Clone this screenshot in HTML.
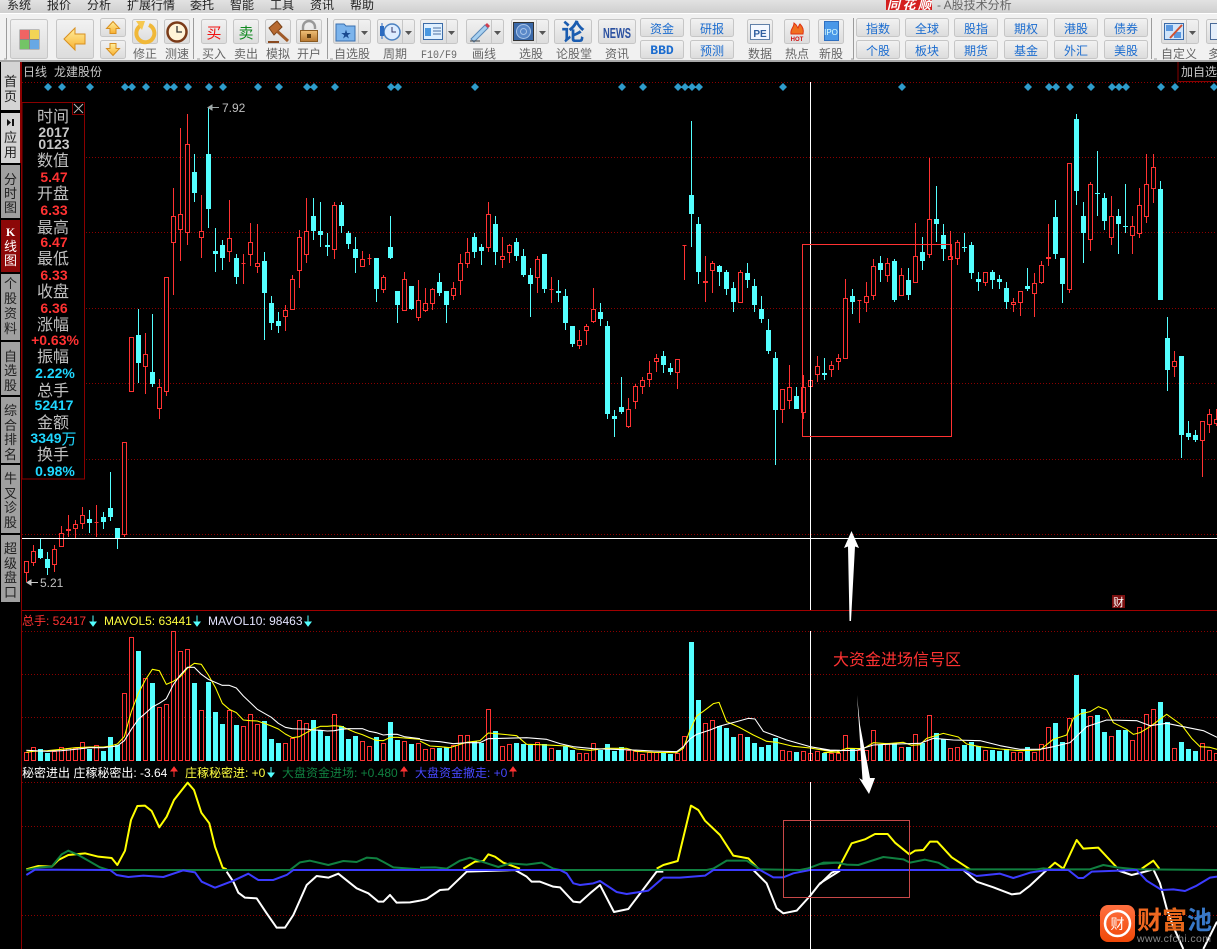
<!DOCTYPE html>
<html><head><meta charset="utf-8"><title>A股技术分析</title>
<style>
html,body{margin:0;padding:0;background:#000;width:1217px;height:949px;overflow:hidden}
svg{display:block}
text{font-family:"Liberation Sans","WenQuanYi Zen Hei","Noto Sans CJK SC",sans-serif}
.lb{font-size:12px;fill:#666;text-anchor:middle}
.bl{font-size:12px;fill:#1b6ccf;text-anchor:middle}
.tb{font-size:13px;fill:#222;text-anchor:middle}
.il{font-size:16px;fill:#c0c0c0;text-anchor:middle}
.iv{font-size:14px;font-weight:bold;text-anchor:middle}
.m{font-size:12px;fill:#222}
.b{fill:url(#bg);stroke:#c6c6c6}
.sep{stroke:#9c9c9c;fill:none}
.grid{stroke:#8a0000;stroke-width:1;stroke-dasharray:1 2;fill:none}
</style></head><body>
<svg width="1217" height="949" viewBox="0 0 1217 949" xmlns="http://www.w3.org/2000/svg">
<defs>
<linearGradient id="bg" x1="0" y1="0" x2="0" y2="1"><stop offset="0" stop-color="#f2f2f2"/><stop offset="1" stop-color="#dcdcdc"/></linearGradient>
<linearGradient id="top" x1="0" y1="0" x2="0" y2="1"><stop offset="0" stop-color="#e2e2e2"/><stop offset="1" stop-color="#cfcfcf"/></linearGradient>
<linearGradient id="ar" x1="0" y1="0" x2="0" y2="1"><stop offset="0" stop-color="#fff0a0"/><stop offset="1" stop-color="#f8b030"/></linearGradient>
<linearGradient id="or" x1="0" y1="0" x2="0" y2="1"><stop offset="0" stop-color="#ff7040"/><stop offset="1" stop-color="#f04808"/></linearGradient>
<linearGradient id="lk" x1="0" y1="0" x2="0" y2="1"><stop offset="0" stop-color="#f0c078"/><stop offset="1" stop-color="#b87830"/></linearGradient>
</defs>
<rect width="1217" height="949" fill="#000"/>

<!-- menu bar -->
<rect width="1217" height="13" fill="url(#top)"/>
<text x="7" y="9" class="m">系统</text><text x="47" y="9" class="m">报价</text><text x="87" y="9" class="m">分析</text><text x="127" y="9" class="m">扩展行情</text><text x="190" y="9" class="m">委托</text><text x="230" y="9" class="m">智能</text><text x="270" y="9" class="m">工具</text><text x="310" y="9" class="m">资讯</text><text x="350" y="9" class="m">帮助</text>
<rect x="886" y="0" width="46" height="10" fill="#d42020"/>
<text x="887" y="9" font-size="13" font-weight="bold" fill="#fff" textLength="44" font-style="italic">同花顺</text>
<text x="937" y="9" font-size="12" fill="#666">- A股技术分析</text>

<!-- toolbar -->
<rect y="13" width="1217" height="1" fill="#fff"/>
<rect y="14" width="1217" height="47" fill="#f1f1f1"/>
<rect y="60" width="1217" height="2" fill="#a8a8a8"/>
<path class="sep" d="M6.5 18V59M193.5 18V59M327.5 18V59M853.5 18V59M1151.5 18V59"/>
<path d="M4 59h3M197 59h3M330 59h3M851 59h3M1154 59h3" stroke="#9c9c9c" fill="none"/>

<rect class="b" x="10.5" y="19.5" width="37" height="39" rx="2"/>
<rect x="19.5" y="29.5" width="20" height="20" fill="#888"/>
<rect x="20" y="30" width="9" height="9" fill="#f06464"/><rect x="30" y="30" width="9" height="9" fill="#f2d455"/><rect x="20" y="40" width="9" height="9" fill="#74c466"/><rect x="30" y="40" width="9" height="9" fill="#68a8e4"/>

<rect class="b" x="56.5" y="19.5" width="37" height="39" rx="2"/>
<path d="M64 39 75 28v6h10v10H75v6z" fill="url(#ar)" stroke="#d89020"/>

<rect class="b" x="100.5" y="18.5" width="25" height="18" rx="2"/>
<rect class="b" x="100.5" y="40.5" width="25" height="18" rx="2"/>
<path d="M113 21.5 119.5 28.5h-3.5v5h-6v-5h-3.5z" fill="url(#ar)" stroke="#d89020"/>
<path d="M113 55.5 119.5 48.5h-3.5v-5h-6v5h-3.5z" fill="url(#ar)" stroke="#d89020"/>

<rect class="b" x="132.5" y="19.5" width="25" height="24" rx="2"/>
<path d="M149 25a9 9 0 1 1-9 1" fill="none" stroke="#f0b838" stroke-width="4"/>
<path d="M136 21l9 0-3 9z" fill="#f6c850"/>
<text class="lb" x="145" y="58">修正</text>

<rect class="b" x="164.5" y="19.5" width="25" height="24" rx="2"/>
<circle cx="177" cy="32" r="9.5" fill="#fff4d8" stroke="#7a3a18" stroke-width="2.5"/>
<path d="M177 26v6h5" stroke="#333" stroke-width="1.3" fill="none"/>
<text class="lb" x="177" y="58">测速</text>

<rect class="b" x="201.5" y="19.5" width="25" height="24" rx="2"/>
<text x="214" y="38" font-size="15" fill="#f01010" text-anchor="middle">买</text>
<text class="lb" x="214" y="58">买入</text>
<rect class="b" x="233.5" y="19.5" width="25" height="24" rx="2"/>
<text x="246" y="38" font-size="15" fill="#108a20" text-anchor="middle">卖</text>
<text class="lb" x="246" y="58">卖出</text>
<rect class="b" x="265.5" y="19.5" width="25" height="24" rx="2"/>
<path d="M269 28 277 21l5 6-8 8z" fill="#b86a30" stroke="#7a4218"/><path d="M277 31 288 41" stroke="#a05a28" stroke-width="3"/><path d="M268 42h11" stroke="#8a4a20" stroke-width="2"/>
<text class="lb" x="278" y="58">模拟</text>
<rect class="b" x="296.5" y="19.5" width="25" height="24" rx="2"/>
<path d="M303 31v-4a6 6 0 0 1 12 0v2" stroke="#999" stroke-width="2.4" fill="none"/>
<rect x="300.5" y="30.5" width="17" height="11" fill="url(#lk)" stroke="#8a5a20"/><rect x="307" y="34" width="4" height="4" fill="#5a3a10"/>
<text class="lb" x="309" y="58">开户</text>

<rect class="b" x="333.5" y="19.5" width="37" height="24" rx="2"/><path d="M358.5 20V43" stroke="#c6c6c6"/>
<path d="M336 24h8l2 2h9v15h-19z" fill="#7cb4ec" stroke="#3a70b0"/><text x="346" y="38" font-size="10" fill="#1a4a90" text-anchor="middle">★</text>
<path d="M361 31h7l-3.5 4z" fill="#555"/>
<text class="lb" x="352" y="58">自选股</text>

<rect class="b" x="377.5" y="19.5" width="37" height="24" rx="2"/><path d="M402.5 20V43" stroke="#c6c6c6"/>
<circle cx="392" cy="32" r="8" fill="#dcecff" stroke="#4a80c0" stroke-width="1.5"/><path d="M392 27v5h4" stroke="#336" fill="none"/><rect x="380" y="26" width="4" height="10" fill="#2a6ac0"/><path d="M382 23v16" stroke="#2a6ac0"/>
<path d="M405 31h7l-3.5 4z" fill="#555"/>
<text class="lb" x="395" y="58">周期</text>

<rect class="b" x="420.5" y="19.5" width="37" height="24" rx="2"/><path d="M446.5 20V43" stroke="#c6c6c6"/>
<rect x="423.5" y="23.5" width="19" height="16" fill="#dff0ff" stroke="#3c6ca8"/><path d="M425 28h6v8h-6z" fill="#4a98e0"/><path d="M433 28h8M433 31h8M433 34h8" stroke="#4a6ea0"/>
<path d="M448 31h7l-3.5 4z" fill="#555"/>
<text x="439" y="58" font-size="11" fill="#666" text-anchor="middle" textLength="36" lengthAdjust="spacingAndGlyphs" style="font-family:'Liberation Mono',monospace">F10/F9</text>

<rect class="b" x="466.5" y="19.5" width="37" height="24" rx="2"/><path d="M491.5 20V43" stroke="#c6c6c6"/>
<path d="M471 39 485 25l3 3-14 14z" fill="#a8d0f0" stroke="#5a88b8"/><path d="M485 25l2-2 3 3-2 2z" fill="#d04050"/><path d="M470 41h10" stroke="#444"/>
<path d="M494 31h7l-3.5 4z" fill="#555"/>
<text class="lb" x="484" y="58">画线</text>

<rect class="b" x="511.5" y="19.5" width="37" height="24" rx="2"/><path d="M536.5 20V43" stroke="#c6c6c6"/>
<rect x="513.5" y="22.5" width="20" height="18" fill="#3a68a8" stroke="#333"/><circle cx="523.5" cy="31.5" r="7" fill="#5a88c8" stroke="#a8c4e8"/><circle cx="523.5" cy="31.5" r="3" fill="none" stroke="#a8c4e8"/>
<path d="M539 31h7l-3.5 4z" fill="#555"/>
<text class="lb" x="531" y="58">选股</text>

<rect class="b" x="554.5" y="19.5" width="37" height="24" rx="2"/>
<text x="573" y="40" font-size="23" font-weight="bold" fill="#1a5cb0" text-anchor="middle">论</text>
<text class="lb" x="574" y="58">论股堂</text>

<rect class="b" x="598.5" y="19.5" width="37" height="24" rx="2"/>
<text x="617" y="38" font-size="15" font-weight="bold" fill="#2a50a0" text-anchor="middle" textLength="28" lengthAdjust="spacingAndGlyphs">NEWS</text>
<text class="lb" x="617" y="58">资讯</text>

<rect class="b" x="640.5" y="18.5" width="43" height="18" rx="2"/><rect class="b" x="640.5" y="40.5" width="43" height="18" rx="2"/>
<text class="bl" x="662" y="33">资金</text><text x="662" y="54" font-size="13" font-weight="bold" fill="#1b6ccf" text-anchor="middle" style="font-family:'Liberation Mono',monospace">BBD</text>
<rect class="b" x="690.5" y="18.5" width="43" height="18" rx="2"/><rect class="b" x="690.5" y="40.5" width="43" height="18" rx="2"/>
<text class="bl" x="712" y="33">研报</text><text class="bl" x="712" y="55">预测</text>

<rect class="b" x="747.5" y="19.5" width="25" height="24" rx="2"/>
<rect x="750.5" y="24.5" width="19" height="15" fill="#f4f8ff" stroke="#6080a8"/><text x="760" y="37" font-size="10" font-weight="bold" fill="#3060a0" text-anchor="middle">PE</text>
<text class="lb" x="760" y="58">数据</text>
<rect class="b" x="784.5" y="19.5" width="25" height="24" rx="2"/>
<path d="M791 34c-1-5 3-6 3-11 3 2 3 4 4 5 1-2 1-3 2-4 3 3 4 6 3 10z" fill="#f07020" stroke="#e03010"/><text x="797" y="41" font-size="6" font-weight="bold" fill="#d01010" text-anchor="middle">HOT</text>
<text class="lb" x="797" y="58">热点</text>
<rect class="b" x="818.5" y="19.5" width="25" height="24" rx="2"/>
<rect x="824.5" y="21.5" width="14" height="19" fill="#4a98e8" stroke="#3070c0"/><text x="831" y="35" font-size="8" fill="#dff" text-anchor="middle">IPO</text>
<text class="lb" x="831" y="58">新股</text>

<rect class="b" x="856.5" y="18.5" width="43" height="18" rx="2"/><rect class="b" x="856.5" y="40.5" width="43" height="18" rx="2"/>
<rect class="b" x="905.5" y="18.5" width="43" height="18" rx="2"/><rect class="b" x="905.5" y="40.5" width="43" height="18" rx="2"/>
<rect class="b" x="954.5" y="18.5" width="43" height="18" rx="2"/><rect class="b" x="954.5" y="40.5" width="43" height="18" rx="2"/>
<rect class="b" x="1004.5" y="18.5" width="43" height="18" rx="2"/><rect class="b" x="1004.5" y="40.5" width="43" height="18" rx="2"/>
<rect class="b" x="1054.5" y="18.5" width="43" height="18" rx="2"/><rect class="b" x="1054.5" y="40.5" width="43" height="18" rx="2"/>
<rect class="b" x="1104.5" y="18.5" width="43" height="18" rx="2"/><rect class="b" x="1104.5" y="40.5" width="43" height="18" rx="2"/>
<text class="bl" x="878" y="33">指数</text><text class="bl" x="878" y="55">个股</text>
<text class="bl" x="927" y="33">全球</text><text class="bl" x="927" y="55">板块</text>
<text class="bl" x="976" y="33">股指</text><text class="bl" x="976" y="55">期货</text>
<text class="bl" x="1026" y="33">期权</text><text class="bl" x="1026" y="55">基金</text>
<text class="bl" x="1076" y="33">港股</text><text class="bl" x="1076" y="55">外汇</text>
<text class="bl" x="1126" y="33">债券</text><text class="bl" x="1126" y="55">美股</text>

<rect class="b" x="1161.5" y="19.5" width="37" height="24" rx="2"/><path d="M1186.5 20V43" stroke="#c6c6c6"/>
<rect x="1164.5" y="23.5" width="19" height="16" fill="#cfe4fa" stroke="#3a6aa8"/><path d="M1166 25h7v6h-7zM1174 32h7v6h-7z" fill="#5a98e0"/><path d="M1170 38 1182 25" stroke="#d05030" stroke-width="2"/>
<path d="M1189 31h7l-3.5 4z" fill="#555"/>
<text class="lb" x="1179" y="58">自定义</text>
<rect class="b" x="1206.5" y="19.5" width="26" height="24" rx="2"/>
<rect x="1210.5" y="23.5" width="12" height="16" fill="#e4eefa" stroke="#4a6a98"/>
<text class="lb" x="1214" y="58">多</text>

<!-- left tabs -->
<rect x="0" y="62" width="21" height="887" fill="#000"/>
<rect x="1" y="62" width="19" height="48" fill="#d4d4d4"/>
<rect x="1" y="113" width="19" height="50" fill="#d4d4d4"/>
<rect x="1" y="165" width="19" height="53" fill="#a0a0a0"/>
<rect x="1" y="220" width="19" height="52" fill="#8c0808"/>
<rect x="1" y="274" width="19" height="66" fill="#a0a0a0"/>
<rect x="1" y="342" width="19" height="53" fill="#a0a0a0"/>
<rect x="1" y="397" width="19" height="66" fill="#a0a0a0"/>
<rect x="1" y="465" width="19" height="68" fill="#a0a0a0"/>
<rect x="1" y="535" width="19" height="67" fill="#a0a0a0"/>
<rect x="20" y="62" width="2" height="101" fill="#8a0000"/>
<text class="tb" x="10.5" y="86">首</text><text class="tb" x="10.5" y="101">页</text>
<path d="M7 119v7l4-3.5zM12 119h2v7h-2z" fill="#111"/>
<text class="tb" x="10.5" y="142">应</text><text class="tb" x="10.5" y="157">用</text>
<text class="tb" x="10.5" y="184">分</text><text class="tb" x="10.5" y="198">时</text><text class="tb" x="10.5" y="212">图</text>
<text x="10.5" y="236" font-size="12" font-weight="bold" fill="#fff" text-anchor="middle" style="font-family:'Liberation Serif',serif">K</text><text class="tb" x="10.5" y="251" style="fill:#fff">线</text><text class="tb" x="10.5" y="265" style="fill:#fff">图</text>
<text class="tb" x="10.5" y="288">个</text><text class="tb" x="10.5" y="303">股</text><text class="tb" x="10.5" y="318">资</text><text class="tb" x="10.5" y="333">料</text>
<text class="tb" x="10.5" y="361">自</text><text class="tb" x="10.5" y="375">选</text><text class="tb" x="10.5" y="390">股</text>
<text class="tb" x="10.5" y="415">综</text><text class="tb" x="10.5" y="430">合</text><text class="tb" x="10.5" y="444">排</text><text class="tb" x="10.5" y="459">名</text>
<text class="tb" x="10.5" y="483">牛</text><text class="tb" x="10.5" y="498">叉</text><text class="tb" x="10.5" y="512">诊</text><text class="tb" x="10.5" y="527">股</text>
<text class="tb" x="10.5" y="553">超</text><text class="tb" x="10.5" y="568">级</text><text class="tb" x="10.5" y="582">盘</text><text class="tb" x="10.5" y="597">口</text>

<!-- frames -->
<path d="M21.5 62V949" stroke="#8a0000" fill="none"/>
<rect x="22" y="610" width="1195" height="1" fill="#a00000"/>
<path d="M1178 62V81.5H1217" stroke="#8a0000" fill="none"/>

<!-- grid -->
<path class="grid" d="M22 82.5H1217M86 157.5H1217M86 232.5H1217M86 308.5H1217M86 383.5H1217M86 459.5H1217M22 534.5H1217M22 631.5H1217M22 674.5H1217M22 717.5H1217M22 782.5H1217M22 826.5H1217M22 915.5H1217"/>

<text x="23" y="76" font-size="12" fill="#c8c8c8">日线</text><text x="54" y="76" font-size="12" fill="#c8c8c8">龙建股份</text>
<text x="1181" y="76" font-size="12" fill="#c8c8c8">加自选</text>

<!-- diamonds -->
<path fill="#2e9ccb" d="M48 83l4 4-4 4-4-4zM62 83l4 4-4 4-4-4zM90 83l4 4-4 4-4-4zM125 83l4 4-4 4-4-4zM132 83l4 4-4 4-4-4zM146 83l4 4-4 4-4-4zM167 83l4 4-4 4-4-4zM174 83l4 4-4 4-4-4zM188 83l4 4-4 4-4-4zM209 83l4 4-4 4-4-4zM223 83l4 4-4 4-4-4zM258 83l4 4-4 4-4-4zM279 83l4 4-4 4-4-4zM307 83l4 4-4 4-4-4zM314 83l4 4-4 4-4-4zM335 83l4 4-4 4-4-4zM391 83l4 4-4 4-4-4zM398 83l4 4-4 4-4-4zM475 83l4 4-4 4-4-4zM622 83l4 4-4 4-4-4zM643 83l4 4-4 4-4-4zM678 83l4 4-4 4-4-4zM685 83l4 4-4 4-4-4zM692 83l4 4-4 4-4-4zM699 83l4 4-4 4-4-4zM783 83l4 4-4 4-4-4zM902 83l4 4-4 4-4-4zM1028 83l4 4-4 4-4-4zM1049 83l4 4-4 4-4-4zM1056 83l4 4-4 4-4-4zM1070 83l4 4-4 4-4-4zM1091 83l4 4-4 4-4-4zM1112 83l4 4-4 4-4-4zM1119 83l4 4-4 4-4-4zM1126 83l4 4-4 4-4-4zM1161 83l4 4-4 4-4-4zM1175 83l4 4-4 4-4-4zM1214 83l4 4-4 4-4-4z"/>

<!-- candles -->
<g shape-rendering="crispEdges">
<path fill="none" stroke="#ff3232" d="M26.5 561V582M33.5 545V566M54.5 545V572M61.5 526V546M68.5 515V537M75.5 520V538M82.5 507V529M96.5 505V537M124.5 442V537M131.5 337V391M145.5 333V394M159.5 379V419M166.5 277V396M173.5 188V295M180.5 128V261M187.5 114V245M201.5 195V258M229.5 200V262M243.5 254V284M250.5 223V266M257.5 224V273M285.5 305V331M292.5 275V309M299.5 230V288M306.5 198V263M334.5 202V259M362.5 251V266M369.5 254V265M383.5 275V293M404.5 272V310M418.5 280V321M425.5 288V312M432.5 288V310M453.5 282V300M460.5 254V295M467.5 238V268M488.5 202V252M502.5 237V268M509.5 244V263M537.5 256V293M551.5 277V303M579.5 330V349M586.5 324V345M593.5 288V323M628.5 398V428M635.5 384V409M642.5 377V394M649.5 361V387M656.5 354V372M677.5 359V389M684.5 245V280M705.5 256V302M712.5 261V293M740.5 270V303M782.5 389V423M789.5 365V409M803.5 375V419M810.5 380V386M817.5 356V382M831.5 361V377M838.5 354V370M845.5 279V359M859.5 300V323M866.5 282V312M873.5 259V300M887.5 258V282M901.5 268V295M915.5 223V282M929.5 158V258M950.5 231V259M957.5 240V265M985.5 272V286M1013.5 298V312M1020.5 291V316M1034.5 273V317M1041.5 261V284M1048.5 224V266M1069.5 163V293M1090.5 182V251M1111.5 196V245M1132.5 216V254M1139.5 188V238M1146.5 154V223M1153.5 154V203M1174.5 351V377M1202.5 421V477M1209.5 409V433M1216.5 409V426"/>
<path fill="#000" stroke="#ff3232" d="M24.5 561.5h4v11h-4zM31.5 551.5h4v11h-4zM52.5 549.5h4v15h-4zM59.5 533.5h4v13h-4zM66.5 529.5h4v1h-4zM73.5 524.5h4v4h-4zM80.5 515.5h4v8h-4zM94.5 522.5h4v0h-4zM122.5 442.5h4v92h-4zM129.5 337.5h4v54h-4zM143.5 354.5h4v12h-4zM157.5 387.5h4v21h-4zM164.5 277.5h4v114h-4zM171.5 216.5h4v26h-4zM178.5 214.5h4v15h-4zM185.5 144.5h4v88h-4zM199.5 231.5h4v6h-4zM227.5 238.5h4v13h-4zM241.5 263.5h4v0h-4zM248.5 242.5h4v12h-4zM255.5 263.5h4v3h-4zM283.5 310.5h4v6h-4zM290.5 279.5h4v30h-4zM297.5 237.5h4v33h-4zM304.5 231.5h4v23h-4zM332.5 205.5h4v44h-4zM360.5 259.5h4v7h-4zM367.5 258.5h4v0h-4zM381.5 277.5h4v12h-4zM402.5 279.5h4v31h-4zM416.5 300.5h4v17h-4zM423.5 303.5h4v7h-4zM430.5 289.5h4v14h-4zM451.5 288.5h4v7h-4zM458.5 263.5h4v17h-4zM465.5 252.5h4v11h-4zM486.5 214.5h4v33h-4zM500.5 256.5h4v3h-4zM507.5 245.5h4v7h-4zM535.5 259.5h4v18h-4zM549.5 289.5h4v0h-4zM577.5 340.5h4v5h-4zM584.5 326.5h4v4h-4zM591.5 309.5h4v12h-4zM626.5 409.5h4v17h-4zM633.5 386.5h4v15h-4zM640.5 380.5h4v6h-4zM647.5 373.5h4v6h-4zM654.5 358.5h4v3h-4zM675.5 359.5h4v13h-4zM682.5 245.5h4v0h-4zM703.5 281.5h4v1h-4zM710.5 263.5h4v7h-4zM738.5 272.5h4v30h-4zM780.5 389.5h4v20h-4zM787.5 387.5h4v13h-4zM801.5 387.5h4v25h-4zM808.5 380.5h4v6h-4zM815.5 366.5h4v8h-4zM829.5 365.5h4v4h-4zM836.5 358.5h4v3h-4zM843.5 298.5h4v60h-4zM857.5 300.5h4v0h-4zM864.5 296.5h4v6h-4zM871.5 266.5h4v29h-4zM885.5 263.5h4v12h-4zM899.5 275.5h4v20h-4zM913.5 256.5h4v26h-4zM927.5 219.5h4v35h-4zM948.5 256.5h4v3h-4zM955.5 242.5h4v16h-4zM983.5 272.5h4v10h-4zM1011.5 302.5h4v2h-4zM1018.5 291.5h4v11h-4zM1032.5 283.5h4v10h-4zM1039.5 265.5h4v17h-4zM1046.5 257.5h4v1h-4zM1067.5 163.5h4v126h-4zM1088.5 184.5h4v55h-4zM1109.5 216.5h4v21h-4zM1130.5 226.5h4v9h-4zM1137.5 205.5h4v28h-4zM1144.5 184.5h4v32h-4zM1151.5 167.5h4v21h-4zM1172.5 361.5h4v5h-4zM1200.5 421.5h4v19h-4zM1207.5 414.5h4v10h-4zM1214.5 419.5h4v4h-4z"/>
<path fill="none" stroke="#54ffff" d="M40.5 538V559M47.5 552V575M89.5 510V533M103.5 512V529M110.5 472V521M117.5 528V549M138.5 309V383M152.5 314V387M194.5 154V202M208.5 107V228M215.5 228V272M222.5 240V270M236.5 254V284M264.5 252V340M271.5 296V330M278.5 312V333M313.5 198V240M320.5 202V247M327.5 233V256M341.5 202V233M348.5 231V249M355.5 237V273M376.5 258V302M390.5 216V259M397.5 291V323M411.5 286V310M439.5 273V296M446.5 291V323M474.5 233V258M481.5 244V265M495.5 216V265M516.5 238V261M523.5 249V277M530.5 268V317M544.5 254V293M558.5 280V302M565.5 289V330M572.5 326V347M600.5 303V326M607.5 321V419M614.5 410V437M621.5 377V414M663.5 351V373M670.5 363V375M691.5 121V247M698.5 217V284M719.5 265V286M726.5 270V295M733.5 282V312M747.5 263V288M754.5 279V312M761.5 296V323M768.5 319V354M775.5 352V465M796.5 387V409M824.5 358V380M852.5 289V314M880.5 256V282M894.5 259V302M908.5 268V300M922.5 237V270M936.5 186V242M943.5 224V261M964.5 233V252M971.5 242V279M978.5 272V291M992.5 270V289M999.5 275V289M1006.5 282V309M1027.5 268V291M1055.5 200V259M1062.5 258V303M1076.5 114V205M1083.5 202V263M1097.5 151V216M1104.5 193V230M1118.5 209V254M1125.5 184V233M1160.5 181V300M1167.5 317V391M1181.5 356V458M1188.5 421V440M1195.5 430V442"/>
<path fill="#54ffff" d="M38 549h5v9h-5zM45 559h5v9h-5zM87 519h5v4h-5zM101 517h5v5h-5zM108 508h5v9h-5zM115 528h5v10h-5zM136 335h5v28h-5zM150 372h5v12h-5zM192 172h5v21h-5zM206 154h5v55h-5zM213 251h5v3h-5zM220 245h5v13h-5zM234 258h5v19h-5zM262 261h5v32h-5zM269 303h5v20h-5zM276 321h5v5h-5zM311 216h5v15h-5zM318 231h5v4h-5zM325 245h5v2h-5zM339 205h5v21h-5zM346 233h5v11h-5zM353 249h5v9h-5zM374 258h5v31h-5zM388 247h5v11h-5zM395 291h5v14h-5zM409 286h5v23h-5zM437 282h5v11h-5zM444 291h5v14h-5zM472 237h5v15h-5zM479 247h5v4h-5zM493 224h5v28h-5zM514 242h5v14h-5zM521 256h5v19h-5zM528 275h5v9h-5zM542 254h5v35h-5zM556 291h5v2h-5zM563 296h5v27h-5zM570 326h5v18h-5zM598 312h5v7h-5zM605 326h5v88h-5zM612 416h5v3h-5zM619 407h5v5h-5zM661 356h5v9h-5zM668 368h5v4h-5zM689 195h5v19h-5zM696 224h5v48h-5zM717 266h5v6h-5zM724 272h5v17h-5zM731 288h5v14h-5zM745 273h5v7h-5zM752 286h5v19h-5zM759 309h5v10h-5zM766 330h5v21h-5zM773 358h5v52h-5zM794 396h5v13h-5zM822 373h5v2h-5zM850 296h5v6h-5zM878 263h5v7h-5zM892 261h5v39h-5zM906 280h5v15h-5zM920 252h5v9h-5zM934 219h5v5h-5zM941 235h5v14h-5zM962 247h5v1h-5zM969 245h5v28h-5zM976 279h5v3h-5zM990 272h5v8h-5zM997 279h5v3h-5zM1004 288h5v14h-5zM1025 286h5v3h-5zM1053 217h5v37h-5zM1060 258h5v26h-5zM1074 119h5v72h-5zM1081 216h5v17h-5zM1095 193h5v1h-5zM1102 198h5v23h-5zM1116 216h5v8h-5zM1123 226h5v1h-5zM1158 189h5v111h-5zM1165 338h5v32h-5zM1179 356h5v79h-5zM1186 433h5v4h-5zM1193 435h5v5h-5z"/>

<!-- volume bars -->
<path fill="#000" stroke="#ff3232" d="M24.5 752.5h4V760.5h-4zM31.5 747.5h4V760.5h-4zM52.5 751.5h4V760.5h-4zM59.5 747.5h4V760.5h-4zM66.5 748.5h4V760.5h-4zM73.5 748.5h4V760.5h-4zM80.5 742.5h4V760.5h-4zM94.5 745.5h4V760.5h-4zM122.5 693.5h4V760.5h-4zM129.5 637.5h4V760.5h-4zM143.5 678.5h4V760.5h-4zM157.5 707.5h4V760.5h-4zM164.5 704.5h4V760.5h-4zM171.5 631.5h4V760.5h-4zM178.5 651.5h4V760.5h-4zM185.5 649.5h4V760.5h-4zM199.5 710.5h4V760.5h-4zM227.5 710.5h4V760.5h-4zM241.5 726.5h4V760.5h-4zM248.5 714.5h4V760.5h-4zM255.5 724.5h4V760.5h-4zM283.5 743.5h4V760.5h-4zM290.5 738.5h4V760.5h-4zM297.5 720.5h4V760.5h-4zM304.5 723.5h4V760.5h-4zM332.5 714.5h4V760.5h-4zM360.5 741.5h4V760.5h-4zM367.5 746.5h4V760.5h-4zM381.5 743.5h4V760.5h-4zM402.5 741.5h4V760.5h-4zM416.5 743.5h4V760.5h-4zM423.5 749.5h4V760.5h-4zM430.5 748.5h4V760.5h-4zM451.5 745.5h4V760.5h-4zM458.5 735.5h4V760.5h-4zM465.5 735.5h4V760.5h-4zM486.5 709.5h4V760.5h-4zM500.5 746.5h4V760.5h-4zM507.5 744.5h4V760.5h-4zM535.5 742.5h4V760.5h-4zM549.5 748.5h4V760.5h-4zM577.5 753.5h4V760.5h-4zM584.5 753.5h4V760.5h-4zM591.5 743.5h4V760.5h-4zM626.5 750.5h4V760.5h-4zM633.5 751.5h4V760.5h-4zM640.5 754.5h4V760.5h-4zM647.5 752.5h4V760.5h-4zM654.5 752.5h4V760.5h-4zM675.5 753.5h4V760.5h-4zM682.5 736.5h4V760.5h-4zM703.5 723.5h4V760.5h-4zM710.5 720.5h4V760.5h-4zM738.5 734.5h4V760.5h-4zM780.5 750.5h4V760.5h-4zM787.5 751.5h4V760.5h-4zM801.5 751.5h4V760.5h-4zM808.5 753.5h4V760.5h-4zM815.5 751.5h4V760.5h-4zM829.5 753.5h4V760.5h-4zM836.5 753.5h4V760.5h-4zM843.5 735.5h4V760.5h-4zM857.5 750.5h4V760.5h-4zM864.5 750.5h4V760.5h-4zM871.5 730.5h4V760.5h-4zM885.5 743.5h4V760.5h-4zM899.5 747.5h4V760.5h-4zM913.5 734.5h4V760.5h-4zM927.5 715.5h4V760.5h-4zM948.5 748.5h4V760.5h-4zM955.5 747.5h4V760.5h-4zM983.5 750.5h4V760.5h-4zM1011.5 752.5h4V760.5h-4zM1018.5 752.5h4V760.5h-4zM1032.5 752.5h4V760.5h-4zM1039.5 744.5h4V760.5h-4zM1046.5 727.5h4V760.5h-4zM1067.5 718.5h4V760.5h-4zM1088.5 716.5h4V760.5h-4zM1109.5 736.5h4V760.5h-4zM1130.5 740.5h4V760.5h-4zM1137.5 727.5h4V760.5h-4zM1144.5 714.5h4V760.5h-4zM1151.5 709.5h4V760.5h-4zM1172.5 748.5h4V760.5h-4zM1200.5 743.5h4V760.5h-4zM1207.5 750.5h4V760.5h-4zM1214.5 753.5h4V760.5h-4z"/>
<path fill="#54ffff" d="M38 749h5V761h-5zM45 753h5V761h-5zM87 749h5V761h-5zM101 751h5V761h-5zM108 737h5V761h-5zM115 745h5V761h-5zM136 651h5V761h-5zM150 683h5V761h-5zM192 683h5V761h-5zM206 682h5V761h-5zM213 712h5V761h-5zM220 724h5V761h-5zM234 725h5V761h-5zM262 721h5V761h-5zM269 739h5V761h-5zM276 743h5V761h-5zM311 720h5V761h-5zM318 730h5V761h-5zM325 736h5V761h-5zM339 726h5V761h-5zM346 739h5V761h-5zM353 736h5V761h-5zM374 737h5V761h-5zM388 722h5V761h-5zM395 740h5V761h-5zM409 744h5V761h-5zM437 748h5V761h-5zM444 747h5V761h-5zM472 741h5V761h-5zM479 743h5V761h-5zM493 731h5V761h-5zM514 743h5V761h-5zM521 744h5V761h-5zM528 745h5V761h-5zM542 744h5V761h-5zM556 750h5V761h-5zM563 746h5V761h-5zM570 750h5V761h-5zM598 750h5V761h-5zM605 744h5V761h-5zM612 751h5V761h-5zM619 747h5V761h-5zM661 752h5V761h-5zM668 754h5V761h-5zM689 642h5V761h-5zM696 700h5V761h-5zM717 726h5V761h-5zM724 728h5V761h-5zM731 737h5V761h-5zM745 737h5V761h-5zM752 743h5V761h-5zM759 747h5V761h-5zM766 745h5V761h-5zM773 738h5V761h-5zM794 752h5V761h-5zM822 753h5V761h-5zM850 748h5V761h-5zM878 745h5V761h-5zM892 743h5V761h-5zM906 747h5V761h-5zM920 743h5V761h-5zM934 733h5V761h-5zM941 739h5V761h-5zM962 745h5V761h-5zM969 742h5V761h-5zM976 746h5V761h-5zM990 750h5V761h-5zM997 751h5V761h-5zM1004 749h5V761h-5zM1025 747h5V761h-5zM1053 723h5V761h-5zM1060 742h5V761h-5zM1074 675h5V761h-5zM1081 709h5V761h-5zM1095 715h5V761h-5zM1102 732h5V761h-5zM1116 730h5V761h-5zM1123 730h5V761h-5zM1158 702h5V761h-5zM1165 722h5V761h-5zM1179 742h5V761h-5zM1186 749h5V761h-5zM1193 751h5V761h-5z"/>
</g>

<!-- volume MA -->
<g transform="translate(0,610) scale(.33333)" fill="none" stroke-width="3.2" stroke-linejoin="round">
<polyline stroke="#ffff00" points="79,427 100,424 142,422 184,418 226,413 268,411 310,411 331,408 352,402 373,380 394,305 415,250 436,210 457,178 478,182 499,223 520,214 541,200 562,175 583,160 604,163 625,195 646,232 667,280 688,298 709,308 730,330 751,332 772,333 793,340 814,348 835,357 856,372 877,383 898,380 919,368 940,357 961,349 982,349 1003,347 1024,349 1045,358 1066,367 1087,374 1108,383 1129,391 1150,392 1171,382 1192,382 1213,384 1260,388"/>
<polyline stroke="#fff" points="79,421 142,424 184,422 226,418 268,413 310,413 352,408 373,392 394,358 415,328 436,310 457,291 478,280 499,266 520,224 541,195 562,172 583,172 604,193 625,208 646,217 667,226 688,226 709,234 730,258 751,278 772,298 793,310 814,322 835,340 856,352 877,356 898,357 919,357 940,360 961,361 982,363 1003,362 1024,358 1045,356 1087,356 1108,364 1129,368 1150,375 1171,373 1192,373 1213,380 1260,386"/>
</g>
<g transform="translate(420,610) scale(.33333)" fill="none" stroke-width="3.2" stroke-linejoin="round">
<polyline stroke="#ffff00" points="0,393 30,408 60,410 90,413 120,403 140,397 180,392 205,369 230,371 290,377 320,403 360,404 400,406 440,408 470,417 510,421 560,415 620,415 650,424 700,427 770,428 790,415 810,360 830,318 850,304 880,281 897,277 920,335 960,353 1000,375 1040,394 1070,397 1120,409 1170,414 1230,424 1260,428"/>
<polyline stroke="#fff" points="0,388 30,393 60,395 100,401 140,398 180,398 205,386 250,385 320,383 380,388 420,401 460,410 520,416 580,418 640,420 700,423 770,425 790,410 810,387 830,373 870,360 900,348 950,335 985,325 1005,327 1030,364 1060,375 1100,390 1170,410 1230,420 1260,421"/>
</g>
<g transform="translate(820,610) scale(.33333)" fill="none" stroke-width="3.2" stroke-linejoin="round">
<polyline stroke="#ffff00" points="10,428 50,426 80,415 130,416 160,398 200,401 250,397 275,406 300,404 320,385 370,370 415,381 440,402 480,410 540,417 600,422 660,420 700,388 740,375 760,325 780,312 810,305 835,290 860,300 880,338 920,358 940,373 960,368 990,350 1040,313 1085,345 1115,385 1140,410 1170,412 1191,418"/>
<polyline stroke="#fff" points="0,416 30,422 110,421 160,405 200,403 300,400 340,385 400,390 480,392 540,407 600,418 660,418 700,410 750,398 800,350 860,330 950,332 990,347 1040,340 1090,350 1150,362 1191,382"/>
</g>

<!-- indicator lines -->
<g transform="translate(0,610) scale(.33333)" fill="none" stroke-width="6" stroke-linejoin="round">
<polyline stroke="#fff" points="680,785 700,815 715,848 735,863 770,865 800,910 830,953 855,953 880,915 920,825 950,798 985,803 1015,791 1070,835 1105,850 1135,875 1150,875 1170,855 1190,878 1230,877 1260,872"/>
<polyline stroke="#ffff00" points="79,778 115,768 155,770 175,750 205,735 255,730 295,740 335,744 352,765 375,722 393,630 412,588 435,587 455,603 478,652 500,620 522,570 563,518 582,540 604,608 628,640 645,710 668,773 680,778"/>
<polyline stroke="#108040" points="79,780 120,772 155,770 185,733 205,722 235,735 270,755 300,772 325,780 870,780 900,757 930,752 985,765 1030,753 1070,756 1100,743 1130,745 1180,772 1260,778"/>
<polyline stroke="#3c3cff" points="79,795 105,779 330,780 350,795 385,801 430,797 490,801 550,781 585,787 605,815 645,833 700,812 745,791 775,810 820,810 860,795 880,780 1260,780"/>
</g>
<g transform="translate(420,610) scale(.33333)" fill="none" stroke-width="6" stroke-linejoin="round">
<polyline stroke="#fff" points="0,872 20,867 60,840 85,838 140,785 285,780 320,800 335,815 360,815 400,830 420,832 460,875 480,877 510,850 540,825 582,906 625,897 710,785 730,785"/>
<polyline stroke="#fff" points="1000,780 1040,820 1070,895 1090,910 1130,902 1170,858 1200,820 1260,782"/>
<polyline stroke="#ffff00" points="130,776 165,755 190,753 205,733 225,740 250,758 300,776"/>
<polyline stroke="#ffff00" points="710,776 730,765 773,753 813,587 835,600 855,632 900,675 940,737 985,745 1015,776"/>
<polyline stroke="#108040" points="0,773 45,772 80,776 120,752 150,743 210,763 235,771 270,760 320,764 365,758 400,776 420,780 860,780 880,776 920,752 980,752 1020,778 1140,780 1165,775 1210,758 1260,758"/>
<polyline stroke="#3c3cff" points="0,780 420,780 440,790 460,820 480,825 520,820 540,813 590,846 620,852 685,842 730,803 780,803 855,797 880,780 1020,780 1060,802 1090,802 1120,790 1170,780 1260,780"/>
</g>
<g transform="translate(820,610) scale(.33333)" fill="none" stroke-width="6" stroke-linejoin="round">
<polyline stroke="#fff" points="0,822 35,788 55,780 430,780 470,815 520,832 575,853 600,850 630,827 680,780"/>
<polyline stroke="#fff" points="890,780 935,795 975,785 1000,778 1020,820 1040,895 1060,950 1090,1017"/>
<polyline stroke="#fff" points="1150,1017 1191,935"/>
<polyline stroke="#ffff00" points="55,776 95,700 135,688 165,672 203,672 225,698 268,733 285,722 310,720 330,695 352,695 395,742 450,778"/>
<polyline stroke="#ffff00" points="685,776 705,758 730,776 770,690 790,716 835,713 890,772"/>
<polyline stroke="#ffff00" points="965,776 1000,752 1018,776"/>
<polyline stroke="#108040" points="0,762 50,758 80,764 115,765 190,741 250,748 270,758 315,749 355,758 390,778 650,778 670,775 700,778 810,778 850,765 890,772 950,778 1191,780"/>
<polyline stroke="#3c3cff" points="0,780 430,780 470,798 540,791 580,804 630,788 680,780 745,780 775,804 790,804 815,785 950,780 980,812 1025,840 1060,838 1095,843 1130,827 1170,803 1191,800"/>
</g>

<!-- crosshair -->
<path d="M22 538.5H1217" stroke="#fff" fill="none"/>
<path d="M810.5 82V610M810.5 631V761M810.5 782V949" stroke="#fff" fill="none"/>

<!-- annotation boxes -->
<rect x="802.5" y="244.5" width="149" height="192" fill="none" stroke="#ff3232"/>
<rect x="783.5" y="820.5" width="126" height="77" fill="none" stroke="#c84848"/>
<polygon points="851.5,531 859,548 855,546.5 851,621 849.5,621 848,546.5 844,548" fill="#fff"/>
<polygon points="857,695 860,725 870,778 875,778 869,794 859,778 862.5,780" fill="#fff"/>
<text x="833" y="665" font-size="16" fill="#ff3232">大资金进场信号区</text>

<!-- info box -->
<rect x="22" y="102.5" width="62.5" height="376.5" fill="#000" stroke="#8a0000"/>
<rect x="72.5" y="102.5" width="12" height="12" fill="#000" stroke="#8a0000"/>
<path d="M74 104l9 9M83 104l-9 9" stroke="#bbb" fill="none"/>
<text class="il" x="53" y="122">时间</text>
<text class="iv" x="54" y="137" fill="#c8c8c8">2017</text>
<text class="iv" x="54" y="149" fill="#c8c8c8">0123</text>
<text class="il" x="53" y="166">数值</text>
<text class="iv" x="54" y="182" fill="#ff3232">5.47</text>
<text class="il" x="53" y="199">开盘</text>
<text class="iv" x="54" y="215" fill="#ff3232">6.33</text>
<text class="il" x="53" y="233">最高</text>
<text class="iv" x="54" y="247" fill="#ff3232">6.47</text>
<text class="il" x="53" y="264">最低</text>
<text class="iv" x="54" y="280" fill="#ff3232">6.33</text>
<text class="il" x="53" y="297">收盘</text>
<text class="iv" x="54" y="313" fill="#ff3232">6.36</text>
<text class="il" x="53" y="330">涨幅</text>
<text class="iv" x="55" y="345" fill="#ff3232">+0.63%</text>
<text class="il" x="53" y="362">振幅</text>
<text class="iv" x="55" y="378" fill="#1fd7ff">2.22%</text>
<text class="il" x="53" y="396">总手</text>
<text class="iv" x="54" y="410" fill="#1fd7ff">52417</text>
<text class="il" x="53" y="428">金额</text>
<text x="46" y="443" font-size="14" font-weight="bold" fill="#1fd7ff" text-anchor="middle">3349</text><text x="69" y="444" font-size="15" fill="#1fd7ff" text-anchor="middle">万</text>
<text class="il" x="53" y="460">换手</text>
<text class="iv" x="55" y="476" fill="#1fd7ff">0.98%</text>

<!-- price flags -->
<path d="M208.5 107.5H219M208 107.5l4-2.5v5z" stroke="#9fa8a8" fill="#9fa8a8"/>
<text x="222" y="112" font-size="12" fill="#c0c0c0">7.92</text>
<path d="M27 582.5H38M27 582.5l4-2.5v5z" stroke="#c8c8c8" fill="#c8c8c8"/>
<text x="40" y="587" font-size="12" fill="#c0c0c0">5.21</text>

<!-- tag -->
<rect x="1112" y="595" width="13" height="13" fill="#7c1010"/>
<text x="1118.5" y="606" font-size="11" fill="#fff" text-anchor="middle">财</text>

<!-- volume header -->
<text x="22" y="625" font-size="12" fill="#ff3232">总手: 52417</text>
<path d="M93 615.5V625M93 626l-3-4h6z" stroke="#54ffff" fill="#54ffff"/>
<text x="104" y="625" font-size="12" fill="#ffff40">MAVOL5: 63441</text>
<path d="M197 615.5V625M197 626l-3-4h6z" stroke="#54ffff" fill="#54ffff"/>
<text x="208" y="625" font-size="12" fill="#e4e4ff">MAVOL10: 98463</text>
<path d="M308 615.5V625M308 626l-3-4h6z" stroke="#54ffff" fill="#54ffff"/>

<!-- indicator header -->
<text x="22" y="777" font-size="12" fill="#fff">秘密进出 庄稼秘密出: -3.64</text>
<path d="M174 777V768M174 767l-3 4h6z" stroke="#ff3232" fill="#ff3232"/>
<text x="185" y="777" font-size="12" fill="#ffff40">庄稼秘密进: +0</text>
<path d="M271 767V776M271 777l-3-4h6z" stroke="#54ffff" fill="#54ffff"/>
<text x="282" y="777" font-size="12" fill="#108040">大盘资金进场: +0.480</text>
<path d="M404 777V768M404 767l-3 4h6z" stroke="#ff3232" fill="#ff3232"/>
<text x="415" y="777" font-size="12" fill="#4848ff">大盘资金撤走: +0</text>
<path d="M513 777V768M513 767l-3 4h6z" stroke="#ff3232" fill="#ff3232"/>

<!-- watermark -->
<rect x="1100" y="905" width="35" height="37" rx="8" fill="url(#or)"/>
<circle cx="1117.5" cy="923.5" r="12.5" fill="none" stroke="#fff" stroke-width="2.5"/>
<text x="1117.5" y="929" font-size="14" fill="#fff" text-anchor="middle">财</text>
<text x="1137" y="929" font-size="25" font-weight="bold" fill="#f06820">财</text>
<text x="1162" y="929" font-size="25" font-weight="bold" fill="#e8681c">富</text>
<text x="1187" y="929" font-size="25" font-weight="bold" fill="#3878c8">池</text>
<text x="1137" y="942" font-size="10.5" fill="#8a8a8a" textLength="74">www.cfchi.com</text>
</svg>
</body></html>
